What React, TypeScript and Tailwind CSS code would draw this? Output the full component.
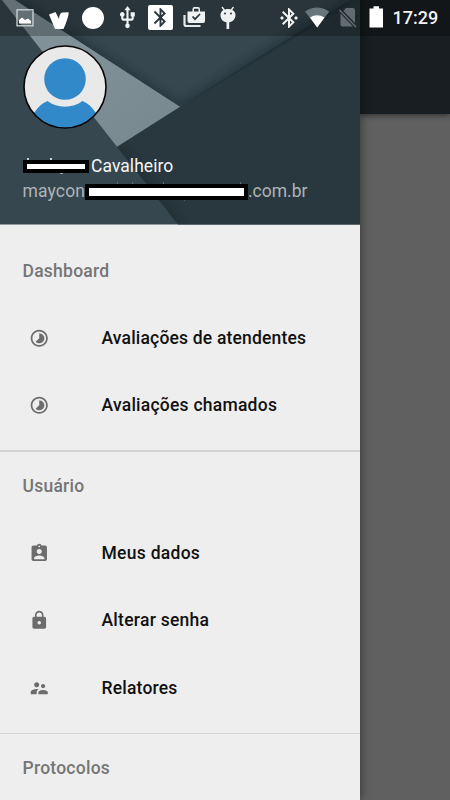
import React from "react";
import type { IconType } from "react-icons";
import {
  MdAssignmentInd,
  MdBluetooth,
  MdBluetoothConnected,
  MdLock,
  MdSupervisorAccount,
  MdTimelapse,
  MdUsb,
} from "react-icons/md";

type Item = { label: string; icon: IconType; tracking: string };

const dashboard: Item[] = [
  { label: "Avaliações de atendentes", icon: MdTimelapse, tracking: "tracking-[0.18px]" },
  { label: "Avaliações chamados", icon: MdTimelapse, tracking: "tracking-[0.24px]" },
];

const usuario: Item[] = [
  { label: "Meus dados", icon: MdAssignmentInd, tracking: "tracking-[0.28px]" },
  { label: "Alterar senha", icon: MdLock, tracking: "tracking-[0.26px]" },
  { label: "Relatores", icon: MdSupervisorAccount, tracking: "tracking-[0.2px]" },
];

function Section({ title, items }: { title: string; items: Item[] }) {
  return (
    <section className="pb-[11px]">
      <h2 className="flex h-[67.5px] items-center pl-[22.5px] pt-[1.5px] text-[17.5px] font-medium tracking-[0.25px] text-[#757575]">
        {title}
      </h2>
      <ul>
        {items.map(({ label, icon: Icon, tracking }) => (
          <li key={label} className="flex h-[67.5px] items-center pl-[29px]">
            <Icon className="mr-[52px] size-[20.5px] shrink-0 text-[#6c6c6c]" />
            <span className={`text-[17.5px] font-medium text-[#111] ${tracking}`}>{label}</span>
          </li>
        ))}
      </ul>
    </section>
  );
}

function HeaderArt() {
  return (
    <svg className="absolute inset-0 size-full" viewBox="0 0 360 225" preserveAspectRatio="none">
      <defs>
        <filter id="soft" x="-20%" y="-20%" width="140%" height="140%">
          <feGaussianBlur stdDeviation="4" />
        </filter>
        <linearGradient id="beam" x1="0" y1="0" x2="1" y2="1">
          <stop offset="0" stopColor="#84959b" />
          <stop offset="1" stopColor="#77898f" />
        </linearGradient>
        <clipPath id="upper">
          <path d="M0 0H358L180 107Z" />
        </clipPath>
        <clipPath id="right">
          <path d="M360 0L180 107L117 147L178 225H360Z" />
        </clipPath>
      </defs>
      <rect width="360" height="225" fill="#37474f" />
      <path d="M360 0H350L180 107L117 147L178 225H360Z" fill="#29373e" />
      <g clipPath="url(#upper)">
        <path d="M350 0L180 107L15 0" fill="none" stroke="#1d2c33" strokeWidth="6" opacity="0.75" filter="url(#soft)" />
      </g>
      <g clipPath="url(#right)">
        <path d="M117 147L178 225" fill="none" stroke="#1a292f" strokeWidth="8" opacity="0.5" filter="url(#soft)" />
      </g>
      <path d="M2 0H15L180 107L117 147Z" fill="url(#beam)" />
    </svg>
  );
}

function Avatar() {
  return (
    <svg className="size-[84px]" viewBox="0 0 84 84">
      <defs>
        <clipPath id="face">
          <circle cx="42" cy="42" r="40.8" />
        </clipPath>
      </defs>
      <circle cx="42" cy="42" r="41" fill="#e9e9e9" />
      <g clipPath="url(#face)" fill="#3289c9">
        <circle cx="42" cy="34" r="20.8" />
        <path d="M11 68C15 62 19 58 24.500 56C34 63.500 50 63.500 59.500 56C65 58 69 62 73 68V84H11Z" />
      </g>
      <circle cx="42" cy="42" r="41" fill="none" stroke="#050505" strokeWidth="1.6" />
    </svg>
  );
}

function StatusBar() {
  return (
    <div className="absolute inset-x-0 top-0 flex h-[35.5px] items-center bg-black/25 text-[#f2f4f4]">
      <svg className="ml-4 h-[35px] w-[18px]" viewBox="16 0 18 35">
        <rect x="17" y="9.800" width="16" height="16" fill="none" stroke="#cfd5d6" strokeWidth="1.300" />
        <path d="M19 23.500V20L22 17.600L25 20L28 18.600L31 21V23.500Z" fill="#fff" />
      </svg>
      <svg className="ml-[14px] h-[35px] w-[22px]" viewBox="48 0 22 35">
        <path d="M49 14.500L55.500 12L59 19C59.500 14.500 60.500 12.500 63 12.500L68.500 12.300C69 14 68 17 67 20C66 23 65 26 63.500 29H55Z" fill="#fff" />
      </svg>
      <span className="ml-[11.500px] size-[22px] rounded-full bg-white" />
      <MdUsb className="ml-[11px] size-[25px]" />
      <span className="ml-2 flex size-[25px] items-center justify-center rounded-[2px] bg-white text-[#29363c]">
        <MdBluetooth className="size-[23px]" />
      </span>
      <svg className="ml-[9px] h-[35px] w-6" viewBox="182 0 24 35">
        <path d="M184.500 15V24.200Q184.500 26 186.500 26H200.500" fill="none" stroke="#e4e8e8" strokeWidth="2.200" />
        <path fillRule="evenodd" d="M187.500 11.500H192.500V9Q192.500 7 194.500 7H198Q200 7 200 9V11.500H205V21Q205 23 203 23H189.500Q187.500 23 187.500 21ZM194 11.500H198.500V8.700H194Z" fill="#eff2f2" />
        <path d="M192.500 16.500L195 19.200L200 14" fill="none" stroke="#29363c" strokeWidth="1.700" />
      </svg>
      <svg className="ml-[13px] h-[35px] w-[18px]" viewBox="219 0 18 35">
        <path d="M222 7L225 11M233.500 7L230.500 11" stroke="#eff2f2" strokeWidth="1.300" />
        <path d="M220.500 15C220.500 7 235.500 7 235.500 15C235.500 19 232.500 22 229.200 22.300V29H226.500V22.300C223 22 220.500 19 220.500 15Z" fill="#eff2f2" />
        <circle cx="225" cy="13.600" r="1" fill="#29363c" />
        <circle cx="231" cy="13.600" r="1" fill="#29363c" />
      </svg>
      <MdBluetoothConnected className="ml-10 size-6" />
      <svg className="ml-[3px] h-[35px] w-[26px]" viewBox="304 0 26 35">
        <path d="M305 11.500Q317 3.500 329.200 11.500L317.200 27.500Z" fill="#68757a" />
        <path d="M310 17.500Q317 13 324.500 17.500L317.200 27.500Z" fill="#fff" />
      </svg>
      <svg className="ml-2 h-[35px] w-5" viewBox="338 0 20 35">
        <path d="M346 8H353Q355 8 355 10V23L343.500 11ZM340.500 13.500L353 26.500H342.500Q340.500 26.500 340.500 24.500Z" fill="#626c70" />
        <path d="M339.500 10L356 27" stroke="#626c70" strokeWidth="1.500" />
      </svg>
      <svg className="ml-[11px] h-[35px] w-[15px]" viewBox="369 0 15 35">
        <path d="M369.500 8.500H373.500V6.300H379V8.500H383V27.500H369.500Z" fill="#fff" />
      </svg>
      <time className="ml-[9px] text-[18px] font-medium">17:29</time>
    </div>
  );
}

export default function App() {
  return (
    <div className="relative flex h-[800px] w-[450px] overflow-hidden bg-[#606060] font-['Roboto',sans-serif]">
      <aside className="z-10 w-[360px] shrink-0 bg-[#eee] shadow-[2px_0_8px_rgba(0,0,0,0.35)]">
        <header className="relative h-[224.5px] pl-[22.500px] pt-[45px]">
          <HeaderArt />
          <div className="relative">
            <Avatar />
            <div className="relative mt-[24px] h-[25px] pl-[68.500px] text-[17.5px] leading-[26px] tracking-[0.05px] text-[#f5f6f6]">
              <span>Cavalheiro</span>
              <span className="absolute left-1 top-[5px] h-1 w-[2px] bg-[#c9cfd1]" />
              <span className="absolute left-[27px] top-[5px] h-1 w-[2px] bg-[#c9cfd1]" />
              <span className="absolute left-[37px] top-[18px] h-[3px] w-[3px] rounded-full bg-[#c9cfd1]" />
              <span className="absolute left-0 top-[6.500px] h-[13.500px] w-[66.500px] border-4 border-black bg-white" />
            </div>
            <div className="relative flex h-[25px] text-[17.5px] leading-[26px] text-[#aeb4b7]">
              <span className="w-[225.500px] tracking-[0.15px]">maycon</span>
              <span>.com.br</span>
              <span className="absolute left-[94px] top-1 h-2 w-[1.500px] bg-[#5d6a70]" />
              <span className="absolute left-[109px] top-1 h-2 w-[1.500px] bg-[#5d6a70]" />
              <span className="absolute left-[140px] top-1 h-2 w-[1.500px] bg-[#5d6a70]" />
              <span className="absolute left-[217px] top-1 h-2 w-[1.500px] bg-[#5d6a70]" />
              <span className="absolute left-[161px] top-5 h-[3px] w-[1.500px] bg-[#4b585e]" />
              <span className="absolute left-[62.500px] top-[5.500px] h-4 w-[163px] border-4 border-black bg-white" />
            </div>
          </div>
        </header>
        <nav className="pt-[12px]">
          <Section title="Dashboard" items={dashboard} />
          <div className="h-[1.500px] bg-[#d3d3d3]" />
          <Section title="Usuário" items={usuario} />
          <div className="h-[1.500px] bg-[#d3d3d3]" />
          <Section title="Protocolos" items={[]} />
        </nav>
      </aside>
      <main className="flex-1">
        <div className="h-[114px] bg-[#181e21] shadow-[0_2px_5px_rgba(0,0,0,0.45)]" />
      </main>
      <div className="absolute inset-0 z-20 h-9">
        <StatusBar />
      </div>
    </div>
  );
}
